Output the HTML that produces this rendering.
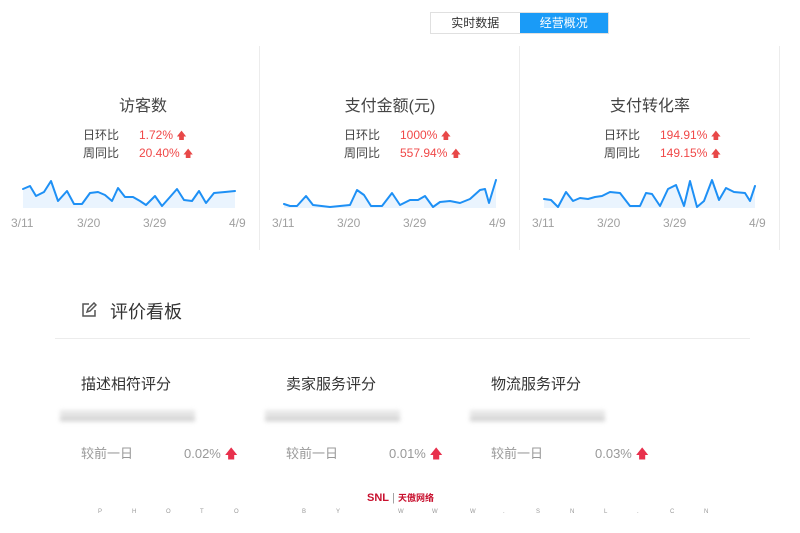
<!DOCTYPE html>
<html><head><meta charset="utf-8"><style>
*{margin:0;padding:0;box-sizing:border-box}
body{width:800px;height:533px;background:#fff;font-family:"Liberation Sans","Noto Sans CJK SC",sans-serif;position:relative;overflow:hidden;color:#333}
.a{position:absolute;white-space:nowrap}
.tabs{left:430px;top:12px;width:179px;height:22px;border:1px solid #e0e0e0;display:flex;font-size:12px}
.tabs div{flex:1;text-align:center;line-height:20px}
.tabs .on{background:#1a9bf7;color:#fff}
.vd{position:absolute;top:46px;width:1px;height:204px;background:#ececec}
.t{font-size:16px;color:#444;width:260px;text-align:center;line-height:20px}
.lab,.val{font-size:12px;line-height:14px}
.lab{color:#444}
.val{color:#f04848}
.up{color:#e84848;font-size:10px}
.ax{font-size:12px;color:#a0a0a0}
.h{font-size:15px;color:#333}
.g{font-size:13px;color:#999;line-height:16px}
.blur{position:absolute;height:14px;width:135px;background:linear-gradient(#fff,#ccc 30%,#f2f2f2 50%,#aaa 65%,#fff);filter:blur(2px);opacity:.7}
.wm{font-size:6px;color:#999;top:509px}
</style></head><body>
<div class="a tabs"><div>实时数据</div><div class="on">经营概况</div></div>
<div class="vd" style="left:259px"></div><div class="vd" style="left:519px"></div><div class="vd" style="left:779px"></div>

<div class="a t" style="left:13px;top:97px">访客数</div>
<div class="a lab" style="left:83px;top:128px">日环比</div><div class="a val" style="left:139px;top:128px">1.72% <span class="up">🡅</span></div>
<div class="a lab" style="left:83px;top:146px">周同比</div><div class="a val" style="left:139px;top:146px">20.40% <span class="up">🡅</span></div>

<div class="a t" style="left:260px;top:97px">支付金额(元)</div>
<div class="a lab" style="left:344px;top:128px">日环比</div><div class="a val" style="left:400px;top:128px">1000% <span class="up">🡅</span></div>
<div class="a lab" style="left:344px;top:146px">周同比</div><div class="a val" style="left:400px;top:146px">557.94% <span class="up">🡅</span></div>

<div class="a t" style="left:520px;top:97px">支付转化率</div>
<div class="a lab" style="left:604px;top:128px">日环比</div><div class="a val" style="left:660px;top:128px">194.91% <span class="up">🡅</span></div>
<div class="a lab" style="left:604px;top:146px">周同比</div><div class="a val" style="left:660px;top:146px">149.15% <span class="up">🡅</span></div>

<svg class="a" style="left:0;top:0" width="800" height="250">
<g fill="#eaf4fe" stroke="none">
<polygon points="23,189 30,186 36,196 44,192 51,181 58,201 67,191 74,204 82,204 90,193 98,192 105,195 112,201 118,188 125,197 133,197 140,201 146,205 155,196 162,206 170,197 177,189 184,200 192,201 199,191 206,203 214,193 225,192 235,191 235,208 23,208"/>
<polygon points="284,204 290,206 297,206 306,196 313,205 330,207 340,206 350,205 357,190 364,195 371,206 382,206 392,193 400,205 410,200 418,200 425,196 433,207 440,202 450,201 460,203 470,199 480,190 485,189 489,203 496,180 496,208 284,208"/>
<polygon points="544,199 551,200 558,207 566,192 573,201 580,198 588,199 595,197 602,196 610,192 620,193 630,206 640,206 646,193 652,194 660,206 668,189 676,185 684,206 690,181 697,207 704,201 712,180 719,200 726,188 734,192 745,193 750,201 755,186 755,208 544,208"/>
</g>
<g fill="none" stroke="#1e90f5" stroke-width="2" stroke-linejoin="round" stroke-linecap="round">
<polyline points="23,189 30,186 36,196 44,192 51,181 58,201 67,191 74,204 82,204 90,193 98,192 105,195 112,201 118,188 125,197 133,197 140,201 146,205 155,196 162,206 170,197 177,189 184,200 192,201 199,191 206,203 214,193 225,192 235,191"/>
<polyline points="284,204 290,206 297,206 306,196 313,205 330,207 340,206 350,205 357,190 364,195 371,206 382,206 392,193 400,205 410,200 418,200 425,196 433,207 440,202 450,201 460,203 470,199 480,190 485,189 489,203 496,180"/>
<polyline points="544,199 551,200 558,207 566,192 573,201 580,198 588,199 595,197 602,196 610,192 620,193 630,206 640,206 646,193 652,194 660,206 668,189 676,185 684,206 690,181 697,207 704,201 712,180 719,200 726,188 734,192 745,193 750,201 755,186"/>
</g>
</svg>
<div class="a ax" style="left:11px;top:216px">3/11</div><div class="a ax" style="left:77px;top:216px">3/20</div><div class="a ax" style="left:143px;top:216px">3/29</div><div class="a ax" style="left:229px;top:216px">4/9</div>
<div class="a ax" style="left:272px;top:216px">3/11</div><div class="a ax" style="left:337px;top:216px">3/20</div><div class="a ax" style="left:403px;top:216px">3/29</div><div class="a ax" style="left:489px;top:216px">4/9</div>
<div class="a ax" style="left:532px;top:216px">3/11</div><div class="a ax" style="left:597px;top:216px">3/20</div><div class="a ax" style="left:663px;top:216px">3/29</div><div class="a ax" style="left:749px;top:216px">4/9</div>

<svg class="a" style="left:81px;top:302px" width="16" height="16" fill="none" stroke="#555" stroke-width="1.5"><path d="M8 2H2v12h12V8"/><path d="M6 10l1-3 6-6 2 2-6 6z"/></svg>
<div class="a" style="left:110px;top:298px;font-size:18px;color:#333">评价看板</div>
<div class="a" style="left:55px;top:338px;width:695px;height:1px;background:#ececec"></div>

<div class="a h" style="left:81px;top:373px">描述相符评分</div>
<div class="a h" style="left:286px;top:373px">卖家服务评分</div>
<div class="a h" style="left:491px;top:373px">物流服务评分</div>
<div class="blur" style="left:60px;top:409px"></div>
<div class="blur" style="left:265px;top:409px"></div>
<div class="blur" style="left:470px;top:409px"></div>
<div class="a g" style="left:81px;top:446px">较前一日</div><div class="a g" style="left:184px;top:446px">0.02% <span style="color:#e8304c">🡅</span></div>
<div class="a g" style="left:286px;top:446px">较前一日</div><div class="a g" style="left:389px;top:446px">0.01% <span style="color:#e8304c">🡅</span></div>
<div class="a g" style="left:491px;top:446px">较前一日</div><div class="a g" style="left:595px;top:446px">0.03% <span style="color:#e8304c">🡅</span></div>

<div class="a" style="left:367px;top:491px;font-size:11px;font-weight:bold;color:#c8102e">SNL<span style="color:#999;font-weight:normal"> | </span><span style="font-size:9px">天傲网络</span></div>
<div class="a wm" style="left:98px">P</div><div class="a wm" style="left:132px">H</div><div class="a wm" style="left:166px">O</div><div class="a wm" style="left:200px">T</div><div class="a wm" style="left:234px">O</div>
<div class="a wm" style="left:302px">B</div><div class="a wm" style="left:336px">Y</div><div class="a wm" style="left:398px">W</div><div class="a wm" style="left:432px">W</div><div class="a wm" style="left:470px">W</div><div class="a wm" style="left:503px">.</div><div class="a wm" style="left:536px">S</div><div class="a wm" style="left:570px">N</div><div class="a wm" style="left:604px">L</div><div class="a wm" style="left:637px">.</div><div class="a wm" style="left:670px">C</div><div class="a wm" style="left:704px">N</div>
</body></html>
